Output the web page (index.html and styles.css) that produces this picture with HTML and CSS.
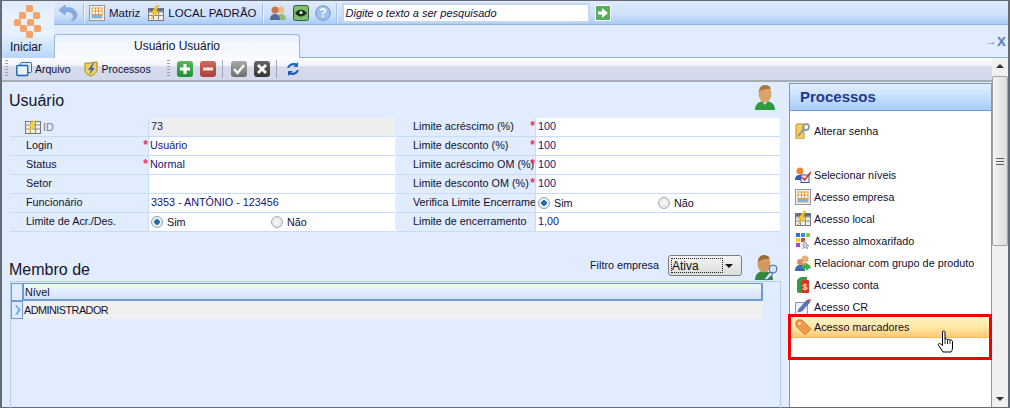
FILE: index.html
```html
<!DOCTYPE html>
<html lang="pt">
<head>
<meta charset="utf-8">
<title>Usuário</title>
<link rel="stylesheet" href="styles.css">
</head>
<body>
<div class="window">
  <header class="head">
    <div class="home">
      <svg class="logo" width="28" height="34" viewBox="0 0 28 34"><g fill="#f4a468"><rect x="12" y="0" width="7" height="7" rx="1.500"/><rect x="5" y="7" width="7" height="7" rx="1.500"/><rect x="19" y="7" width="7" height="7" rx="1.500"/><rect x="0" y="14" width="7" height="7" rx="1.500"/><rect x="13" y="14" width="7" height="7" rx="1.500"/><rect x="6" y="20" width="7" height="7" rx="1.500"/><rect x="20" y="20" width="7" height="7" rx="1.500"/><rect x="12" y="26" width="7" height="7" rx="1.500"/></g></svg>
      <span class="home-label">Iniciar</span>
    </div>
    <div class="head-right">
      <div class="quickbar">
        <svg class="i20 undo" viewBox="0 0 20 20"><path d="M7 2 1 7l6 5V9c4-1 7 0 8 3 1 3 0 5-2 6 5-1 7-5 5-9-2-4-7-5-11-4Z" fill="#86abe0" stroke="#6f95cf" stroke-width=".6"/></svg>
        <span class="vsep"></span>
        <svg class="i16" viewBox="0 0 16 16"><rect x=".5" y=".5" width="15" height="15" fill="#eef0f2" stroke="#8f98a3"/><rect x="3" y="3" width="10" height="10" fill="#fff" stroke="#d9a441"/><path d="M3 6h10M3 9.500h10M6.500 3v10M9.500 3v10" stroke="#e89a3c"/><rect x="3" y="10" width="10" height="3" fill="#7fb2ec"/></svg>
        <span class="qlabel">Matriz</span>
        <svg class="i16 local" viewBox="0 0 16 16"><rect x=".5" y="3.500" width="15" height="12" fill="#f2f0e6" stroke="#77777d"/><path d="M.5 7h15M.5 10.500h15M5.500 3.500v12M10.500 3.500v12" stroke="#8c8c90"/><rect x=".5" y="3.500" width="15" height="3" fill="#5f6f8c"/><path d="M9 0 3 8h3l-3 6 8-8H8l3-6Z" fill="#f7d02c" stroke="#d99a18" stroke-width=".5"/></svg>
        <span class="qlabel last">LOCAL PADRÃO</span>
        <span class="vsep"></span>
        <svg class="i16 users" viewBox="0 0 16 16"><circle cx="11" cy="5" r="3.500" fill="#e8bd8b"/><path d="M6 15c0-4 2-6 5-6s5 2 5 6Z" fill="#8fc07a"/><circle cx="5" cy="5" r="3.500" fill="#c9744a"/><path d="M0 15c0-4 2-6 5-6s5 2 5 6Z" fill="#56689a"/></svg>
        <svg class="i16 eye" viewBox="0 0 16 16"><rect x=".5" y=".5" width="15" height="15" rx="2" fill="#7cc06e" stroke="#3d5a3a"/><path d="M2 8c3-4.500 9-4.500 12 0-3 4.500-9 4.500-12 0Z" fill="#1c2f22"/><circle cx="8" cy="7.500" r="1.500" fill="#dfe8dc"/></svg>
        <svg class="i16 help" viewBox="0 0 16 16"><circle cx="8" cy="8" r="7.300" fill="#9fc1ec" stroke="#6f96cb"/><text x="8" y="12" text-anchor="middle" class="help-mark">?</text></svg>
        <span class="vsep"></span>
        <span class="search">Digite o texto a ser pesquisado</span>
        <svg class="i16 go" viewBox="0 0 16 16"><rect width="16" height="16" fill="#fff"/><rect x="1" y="1" width="14" height="14" fill="#58ad5c"/><path d="M3 6.500h4V3l6 5-6 5V9.500H3Z" fill="#fff"/></svg>
      </div>
      <div class="tabstrip">
        <div class="tab">Usuário Usuário</div>
        <div class="pin"><span class="pin-arrow">→</span><span class="pin-x">x</span></div>
      </div>
    </div>
  </header>

  <div class="body">
    <div class="workspace">
      <div class="toolbar">
        <span class="grip"></span>
        <svg class="i16 t1" viewBox="0 0 16 16"><rect x="4.500" y="1.500" width="11" height="10" rx="1" fill="#dcebfb" stroke="#2a6fb8"/><rect x=".8" y="4.500" width="11" height="10" rx="1" fill="#e8f2fc" stroke="#1f65b0" stroke-width="1.400"/></svg>
        <span class="tlabel">Arquivo</span>
        <svg class="i16 t2" viewBox="0 0 16 16"><path d="M2 2c4 1 8-1 12-1v8c-1 4-4 5-6 6-3-1-6-3-6-6Z" fill="#f4d54a" stroke="#9b8a35"/><path d="M10 2 5 9h3l-2 5 6-7H9l2-5Z" fill="#3c68c8"/></svg>
        <span class="tlabel">Processos</span>
        <span class="grip g2"></span>
        <span class="sq green"><svg width="16" height="16" viewBox="0 0 16 16"><path d="M6.500 3h3v3.500H13v3H9.500V13h-3V9.500H3v-3h3.500Z" fill="#fff"/></svg></span>
        <span class="sq red"><svg width="16" height="16" viewBox="0 0 16 16"><rect x="3" y="6.500" width="10" height="3" fill="#f4e6e3"/></svg></span>
        <span class="vsep tsep"></span>
        <span class="sq gray"><svg width="16" height="16" viewBox="0 0 16 16"><path d="m3 8 3.500 4L13 4" fill="none" stroke="#f2f2f2" stroke-width="2.600"/></svg></span>
        <span class="sq dark"><svg width="16" height="16" viewBox="0 0 16 16"><path d="m4 4 8 8M12 4l-8 8" stroke="#fff" stroke-width="2.800"/></svg></span>
        <span class="vsep tsep"></span>
        <svg class="i16 sync" viewBox="0 0 16 16"><path d="M13 1v5H8l2-1.500C8 3.500 5 5 4 7H2c1-4 6-6 9.500-4.500Z" fill="#2166c4"/><path d="M3 15v-5h5L6 11.500c2 1 5-.5 6-2.500h2c-1 4-6 6-9.500 4.500Z" fill="#1c5cb4"/></svg>
      </div>

      <div class="content">
        <main class="main">
          <div class="title-row">
            <h1 class="title">Usuário</h1>
            <svg class="user-icon" width="20" height="26" viewBox="0 0 20 26"><path d="M0 25c0-5 3-9 10-9s10 4 10 9Z" fill="#2f9a3f"/><path d="m7 16 3 4 3-4Z" fill="#d6efd0"/><ellipse cx="10" cy="9" rx="6.500" ry="8.500" fill="#d8a468"/><path d="M4 7c0-5 3-7 6-7s5 1 6 4c-4-1-8 0-12 3Z" fill="#a5783f"/></svg>
          </div>

          <div class="form">
            <div class="col">
              <div class="row"><div class="lbl muted"><svg class="id-icon" width="16" height="14" viewBox="0 0 16 14"><rect x=".5" y="1.500" width="15" height="12" fill="#f2f0e6" stroke="#77777d"/><path d="M.5 5h15M.5 9h15M5.500 1.500v12M10.500 1.500v12" stroke="#8c8c90"/><path d="M9 0 3 7h3l-3 6 8-7H8l3-6Z" fill="#f7d02c"/></svg>ID</div><div class="val readonly">73</div></div>
              <div class="row"><div class="lbl">Login<span class="req">*</span></div><div class="val tight">Usuário</div></div>
              <div class="row"><div class="lbl">Status<span class="req">*</span></div><div class="val tight">Normal</div></div>
              <div class="row"><div class="lbl">Setor</div><div class="val"></div></div>
              <div class="row"><div class="lbl">Funcionário</div><div class="val">3353 - ANTÔNIO - 123456</div></div>
              <div class="row"><div class="lbl">Limite de Acr./Des.</div><div class="val radios"><span class="radio on"></span><span class="rtext">Sim</span><span class="radio"></span><span class="rtext">Não</span></div></div>
            </div>
            <div class="col col2">
              <div class="row"><div class="lbl">Limite acréscimo (%)<span class="req">*</span></div><div class="val">100</div></div>
              <div class="row"><div class="lbl">Limite desconto (%)<span class="req">*</span></div><div class="val">100</div></div>
              <div class="row"><div class="lbl">Limite acréscimo OM (%)<span class="req">*</span></div><div class="val">100</div></div>
              <div class="row"><div class="lbl">Limite desconto OM (%)<span class="req">*</span></div><div class="val">100</div></div>
              <div class="row"><div class="lbl clip">Verifica Limite Encerramento</div><div class="val radios"><span class="radio on"></span><span class="rtext">Sim</span><span class="radio"></span><span class="rtext">Não</span></div></div>
              <div class="row"><div class="lbl">Limite de encerramento</div><div class="val">1,00</div></div>
            </div>
          </div>

          <div class="member-head">
            <h2 class="title">Membro de</h2>
            <span class="filter-label">Filtro empresa</span>
            <div class="select"><span class="select-text">Ativa</span><span class="caret"></span></div>
            <svg class="key-icon" width="23" height="26" viewBox="0 0 23 26"><path d="M0 25c0-5 3-9 9-9s9 4 9 9Z" fill="#2f8a3a"/><ellipse cx="9" cy="9" rx="6.500" ry="8.500" fill="#d39a5f"/><path d="M3 7c0-5 3-7 6-7s5 1 6 4c-4-1-8 0-12 3Z" fill="#9a6c35"/><circle cx="18" cy="14" r="4" fill="#cfe2f6" stroke="#45689c"/><path d="m15 17-6 7 3 1 6-6Z" fill="#cfe2f6" stroke="#45689c"/></svg>
          </div>

          <div class="grid">
            <div class="grid-row"><div class="indicator"></div><div class="colhead">Nível</div></div>
            <div class="grid-row"><div class="indicator current"><svg width="7" height="10" viewBox="0 0 7 10"><path d="M1 0h2l4 5-4 5H1l3-5Z" fill="#7fb0ea"/></svg></div><div class="cell">ADMINISTRADOR</div></div>
          </div>
        </main>

        <aside class="panel">
          <div class="panel-head">Processos</div>
          <ul class="items">
            <li class="item first"><svg class="i16" viewBox="0 0 16 16"><rect x="1" y="1" width="8" height="15" rx="1" fill="#f6cf5a" stroke="#c08f22"/><circle cx="11" cy="4" r="3" fill="none" stroke="#8f9aa5" stroke-width="1.800"/><path d="m9 6-6 7" stroke="#8f9aa5" stroke-width="2"/></svg>Alterar senha</li>
            <li class="item"><svg class="i16" viewBox="0 0 16 16"><circle cx="5" cy="4" r="3.500" fill="#e88a2e"/><path d="M0 13c0-4 2-5 5-5s4 1 5 3v2Z" fill="#2f5fb4"/><rect x="6" y="8" width="8" height="7.500" fill="#fff" stroke="#2b4f96"/><path d="m7 10 2.500 3L16 5" fill="none" stroke="#e0282e" stroke-width="1.600"/></svg>Selecionar níveis</li>
            <li class="item"><svg class="i16" viewBox="0 0 16 16"><rect x=".5" y=".5" width="15" height="15" fill="#eef0f2" stroke="#8f98a3"/><rect x="3" y="3" width="10" height="10" fill="#fff" stroke="#d9a441"/><path d="M3 6h10M3 9.500h10M6.500 3v10M9.500 3v10" stroke="#e89a3c"/><rect x="3" y="10" width="10" height="3" fill="#7fb2ec"/></svg>Acesso empresa</li>
            <li class="item"><svg class="i16" viewBox="0 0 16 16"><rect x=".5" y="2.500" width="15" height="12" fill="#f2f0e6" stroke="#77777d"/><path d="M.5 6h15M.5 10h15M5.500 2.500v12M10.500 2.500v12" stroke="#8c8c90"/><rect x=".5" y="2.500" width="15" height="3" fill="#5f6f8c"/><path d="M9 0 3 8h3l-3 6 8-8H8l3-6Z" fill="#f7d02c" stroke="#d99a18" stroke-width=".5"/></svg>Acesso local</li>
            <li class="item"><svg class="i16" viewBox="0 0 16 16"><rect x="1" y="0" width="4" height="4" fill="#3b6fe0"/><rect x="6" y="0" width="4" height="4" fill="#3f8de0"/><rect x="11" y="0" width="4" height="4" fill="#8cc63f"/><rect x="1" y="5" width="4" height="4" fill="#f7d020"/><rect x="6" y="5" width="4" height="4" fill="#e04040"/><rect x="1" y="10" width="4" height="4" fill="#b040d0"/><path d="M8 7v9l2-2 2 2 1-1-2-2h3Z" fill="#c9ced4" stroke="#74797f" stroke-width=".5"/></svg>Acesso almoxarifado</li>
            <li class="item"><svg class="i16" viewBox="0 0 16 16"><circle cx="10" cy="4" r="3.500" fill="#e3b27c"/><path d="M5 14c0-4 2-6 5-6s5 2 6 5Z" fill="#c98a55"/><circle cx="5" cy="7" r="3" fill="#d98d58"/><path d="M0 16c0-4 2-6 5-6s5 2 5 6Z" fill="#3d6ab4"/><path d="M7 10.500h4V8l5 4-5 4v-2.500H7Z" fill="#2fb24a"/></svg>Relacionar com grupo de produto</li>
            <li class="item"><svg class="i16" viewBox="0 0 16 16"><path d="M2 4c0-2 2-3 4-4h6v3H6v13H4c-1 0-2-1-2-2Z" fill="#3b9a4a"/><rect x="6" y="3" width="8" height="13" rx="1" fill="#d8322a"/><text x="10" y="13" text-anchor="middle" class="dollar">$</text></svg>Acesso conta</li>
            <li class="item"><svg class="i16" viewBox="0 0 16 16"><rect x=".5" y="3.500" width="12" height="12" fill="#eef2f8" stroke="#8c9ab0"/><path d="M3 13 4 10 12 1l3 2-8 9Z" fill="#5a72b8" stroke="#2d548f" stroke-width=".5"/><path d="m12 1 3 2 1-2-2-1Z" fill="#e04a3a"/></svg>Acesso CR</li>
            <li class="marked">
              <div class="item hot"><svg class="i16" viewBox="0 0 16 16"><path d="M1 3c0-1 1-2 2-2h4l8 8c.7.700.7 1.300 0 2l-4 4c-.7.700-1.300.7-2 0L1 7Z" fill="#f19a4a" stroke="#dc7f30"/><circle cx="4.500" cy="4.500" r="1.200" fill="#fff"/></svg>Acesso marcadores</div>
              <svg class="hand" width="18" height="24" viewBox="0 0 18 24"><path d="M5.500 1.500c1-1 2.500-.5 2.500 1V9c1-1 2 0 2.500.5C11.500 9 12.500 9.500 13 10c1-.5 2.500.5 2.500 1.500V18c0 2-1 3-1.500 4H6l-4-6c-1-1-1-2 0-2.500.5-.3 2 .5 3.500 2Z" fill="#fff" stroke="#000"/><path d="M8 9v5M10.500 9.500V14M13 10v4" stroke="#000" stroke-width=".8"/></svg>
            </li>
          </ul>
        </aside>
      </div>
    </div>

    <div class="scrollbar">
      <span class="arrow up"></span>
      <div class="thumb"><span class="thumb-grip"></span></div>
      <span class="arrow down"></span>
    </div>
  </div>
</div>
</body>
</html>
```

FILE: styles.css
```css
* { box-sizing: border-box; }
html, body { margin: 0; padding: 0; }
body { width: 1010px; height: 408px; overflow: hidden; background: #e1edfe; font-family: "Liberation Sans", Arial, sans-serif; font-size: 10.800px; color: #10103a; }
ul { list-style: none; margin: 0; padding: 0; }
h1, h2 { margin: 0; font-weight: normal; }
svg { display: block; flex: none; }

.window { width: 1010px; height: 408px; display: flex; flex-direction: column; border: solid #646b75; border-width: 1px 2px 1px 2px; background: #e1edfe; }

.head { display: flex; height: 57px; flex: none; }
.home { width: 52px; flex: none; display: flex; flex-direction: column; align-items: center; background: linear-gradient(#dde9fb, #eaf2fe 30%, #e6f0ff 60%, #b8d5fb); color: #10102a; }
.logo { margin: 4px 0 0 12px; align-self: flex-start; }
.home-label { margin: 1px 4px 0 0; font-size: 12px; }
.head-right { flex: 1; min-width: 0; display: flex; flex-direction: column; }

.quickbar { height: 24px; display: flex; align-items: center; background: linear-gradient(#dfeafd, #cfe0fa 60%, #a9cdf8); border-bottom: 1px solid #8db2e3; }
.i20 { width: 20px; height: 20px; }
.i16 { width: 16px; height: 16px; }
.undo { margin-left: 4px; }
.vsep { width: 1px; height: 20px; background: #a8c0e4; box-shadow: 1px 0 0 #eef4ff; }
.quickbar .vsep { margin: 0 5px 0 5px; }
.qlabel { font-size: 11.500px; margin-left: 4px; margin-right: 8px; color: #101030; }
.qlabel.last { margin-right: 0; }
.users { margin-left: 2px; }
.eye { margin-left: 7px; }
.help { margin-left: 6px; }
.help-mark { font-size: 12px; font-weight: bold; fill: #fff; font-family: "Liberation Sans", sans-serif; }
.dollar { font-size: 9px; font-weight: bold; fill: #ffe9a0; font-family: "Liberation Sans", sans-serif; }
.search { width: 248px; height: 20px; padding: 0 2px; line-height: 16px; border: 2px solid #c5d6ee; background: #fff; font-style: italic; font-size: 11px; color: #101038; }
.go { margin-left: 5px; }

.tabstrip { flex: 1; display: flex; align-items: flex-end; background: #e1edfe; border-bottom: 1px solid #8db2e3; padding-right: 2px; }
.tab { width: 246px; height: 24px; margin-bottom: -1px; text-align: center; line-height: 23px; font-size: 12px; color: #101030; background: linear-gradient(#e6f0ff, #f3f8ff 40%, #f8fbff); border: 1px solid #9ab8de; border-bottom: 0; border-radius: 3px 3px 0 0; }
.pin { margin-left: auto; display: flex; align-items: center; height: 20px; margin-bottom: 6px; color: #6f97cc; }
.pin-arrow { font-size: 12px; line-height: 14px; }
.pin-x { font-size: 16px; font-weight: bold; color: #5c87bd; line-height: 14px; }

.body { flex: 1; min-height: 0; display: flex; }
.workspace { width: 990px; flex: none; display: flex; flex-direction: column; min-height: 0; }
.toolbar { height: 24px; flex: none; display: flex; align-items: center; background: linear-gradient(#fdfdff, #eff2f9 35%, #d5daec 40%, #d3d9ec); border-bottom: 2px solid #a8abb3; padding-bottom: 1px; }
.grip { width: 3px; height: 17px; margin-left: 3px; background: repeating-linear-gradient(#9aa0ad 0 1px, transparent 1px 3px); }
.g2 { margin-left: 16px; }
.t1 { margin-left: 8px; }
.t2 { margin-left: 12px; }
.tlabel { margin-left: 3px; font-size: 10.500px; color: #101038; }
.sq { width: 16px; height: 16px; border-radius: 3px; flex: none; margin-left: 7px; }
.green { background: linear-gradient(#58b85a, #1f8f33); }
.red { background: linear-gradient(#cf6a5c, #a83e34); }
.gray { background: linear-gradient(#a8a8a8, #6c6c6c); }
.dark { background: linear-gradient(#666, #333); }
.vsep.tsep { height: 18px; background: #a0a5b0; box-shadow: none; margin: 0 0 0 6px; }
.tsep + .sq { margin-left: 8px; }
.sync { margin-left: 8px; }

.content { flex: 1; min-height: 0; display: flex; padding-top: 1px; }
.main { width: 787px; flex: none; padding-left: 7px; }
.title-row { height: 35px; display: flex; justify-content: space-between; align-items: flex-start; padding: 2px 14px 0 0; width: 780px; }
.title { font-size: 16px; line-height: 22px; color: #141428; margin-top: 5px; }

.form { display: flex; width: 772px; padding-left: 1px; }
.col { width: 385px; flex: none; }
.col2 { width: 383px; margin-left: 2px; }
.row { height: 19px; display: flex; border-bottom: 1px solid #c6dcfa; }
.lbl { width: 139px; flex: none; padding-left: 16px; position: relative; line-height: 17px; border-right: 1px solid #c6dcfa; white-space: nowrap; overflow: hidden; color: #10102e; }
.muted { color: #7a7f8c; padding-left: 15px; display: flex; align-items: center; gap: 2px; }
.clip { padding-right: 4px; }
.req { position: absolute; right: 0; top: 1px; color: #f02a60; font-weight: bold; font-size: 12px; line-height: 14px; }
.val { flex: 1; min-width: 0; background: #fff; line-height: 17px; padding-left: 2px; color: #14147a; }
.tight { padding-left: 1px; }
.readonly { background: #eeeeee; color: #202060; }
.radios { display: flex; align-items: center; color: #10102e; }
.radio { width: 12px; height: 12px; border-radius: 50%; flex: none; background: radial-gradient(#fafafa, #d8dde2); border: 1px solid #a7adb3; }
.radio.on { background: radial-gradient(circle, #1f6e9e 0 2.500px, #e9eef2 3px); border-color: #8ea4b8; }
.rtext { margin-left: 4px; width: 104px; }

.member-head { width: 772px; height: 54px; display: flex; align-items: flex-end; padding-bottom: 5px; }
.member-head .title { margin: 0 auto 0 0; line-height: 22px; }
.filter-label { color: #10103a; margin-bottom: 10px; margin-right: 9px; }
.select { width: 74px; height: 21px; margin-bottom: 5px; border: 1px solid #7d7d7d; border-radius: 3px; background: linear-gradient(#f4f4f4, #dcdcdc); display: flex; align-items: center; justify-content: space-between; padding: 2px 8px 2px 2px; }
.select-text { width: 52px; height: 15px; line-height: 14px; border: 1px dotted #222; color: #111; font-size: 12px; }
.caret { border: 4px solid transparent; border-top: 4px solid #111; border-bottom: 0; }
.key-icon { margin-left: 13px; margin-right: 3px; }

.grid { width: 771px; margin: -5px 0 0 1px; height: 130px; border: 1px solid #b5cdeb; border-width: 1px 1px 0 1px; padding: 1px 17px 0 0; }
.grid-row { display: flex; height: 18px; }
.indicator { width: 12px; flex: none; background: #e1edfe; border: 1px solid #6f9bd8; display: flex; align-items: center; justify-content: center; }
.colhead { flex: 1; border: 2px solid #6f9bd8; border-width: 1px 2px 2px 1px; background: linear-gradient(#f4f8ff, #cfe2fb); line-height: 17px; padding-left: 1px; color: #10102e; }
.cell { flex: 1; background: #f0f0f0; color: #10102e; line-height: 19px; padding-left: 1px; letter-spacing: -.5px; }

.panel { width: 203px; flex: none; border: solid #6f9bd8; border-width: 1px 1px 0 1px; background: #fff; }
.panel-head { height: 27px; border-bottom: 1px solid #6f9bd8; background: linear-gradient(#e4effe, #a9cef9); color: #1f3a8c; font-weight: bold; font-size: 15px; line-height: 25px; padding-left: 10px; }
.items { padding-top: 9px; }
.item { height: 22px; display: flex; align-items: center; gap: 3px; padding-left: 5px; color: #101030; }
.item.first { margin-bottom: 22px; }
.marked { position: relative; height: 46px; margin: -4px -1px 0 -2px; border: 3px solid #f50000; }
.item.hot { height: 21px; padding-left: 4px; background: linear-gradient(#fff2c8, #ffe9a8 50%, #ffc974); border-bottom: 1px solid #fbb65e; }
.hand { position: absolute; left: 146px; top: 13px; }

.scrollbar { flex: 1; background: #f0f0f0; display: flex; flex-direction: column; align-items: center; }
.arrow { width: 0; height: 0; border: 4px solid transparent; flex: none; }
.arrow.up { border-bottom: 4px solid #333; border-top: 0; margin-top: 6px; }
.thumb { width: 16px; height: 170px; margin-top: 8px; border: 1px solid #a2a2a2; border-radius: 2px; background: linear-gradient(90deg, #f4f4f4, #dcdcdc); display: flex; align-items: center; justify-content: center; }
.thumb-grip { width: 8px; height: 7px; background: repeating-linear-gradient(#606060 0 1px, transparent 1px 3px); }
.arrow.down { border-top: 4px solid #333; border-bottom: 0; margin-top: auto; margin-bottom: 6px; }
```
